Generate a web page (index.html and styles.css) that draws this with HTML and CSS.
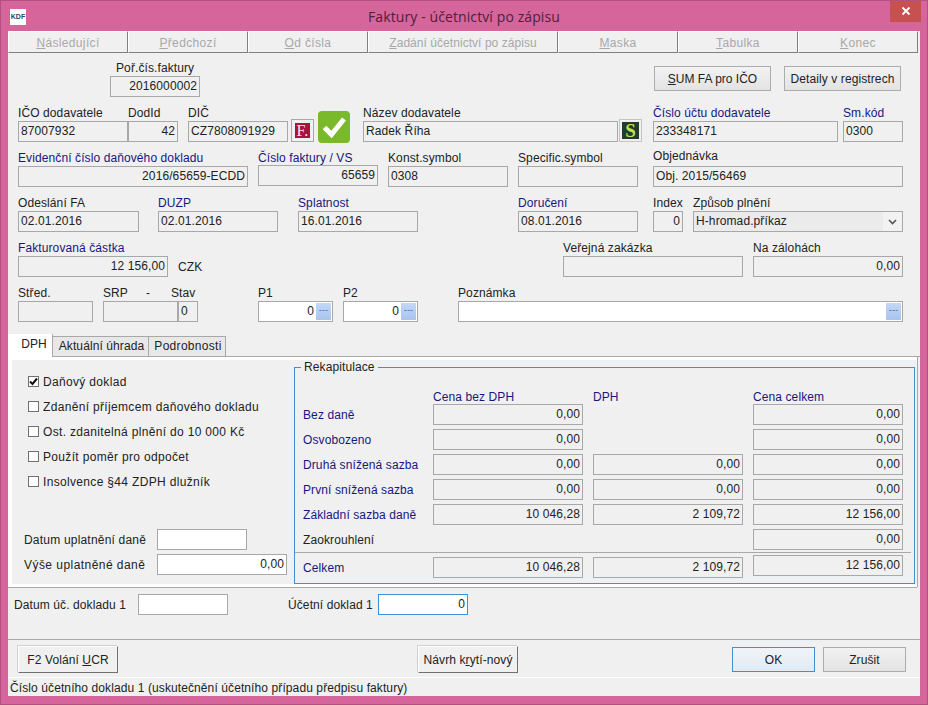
FILE: index.html
```html
<!DOCTYPE html>
<html lang="cs">
<head>
    <meta charset="UTF-8">
    <title>Faktury - účetnictví po zápisu</title>
    <link rel="stylesheet" href="styles.css">
</head>
<body>
<div class="window">
    <div class="titlebar">
        <div class="app-icon">KDF</div>
        <div class="title">Faktury - účetnictví po zápisu</div>
        <div class="close">
            <svg width="10" height="10" viewBox="0 0 10 10"><path d="M1.5 1.5l7 7M8.5 1.5l-7 7" stroke="#fff" stroke-width="1.8"/></svg>
        </div>
    </div>

    <div class="content">
        <div class="toolbar">
            <div class="tool t1"><u>N</u>ásledující</div>
            <div class="tool t1"><u>P</u>ředchozí</div>
            <div class="tool t1"><u>O</u>d čísla</div>
            <div class="tool t2"><u>Z</u>adání účetnictví po zápisu</div>
            <div class="tool t1"><u>M</u>aska</div>
            <div class="tool t1"><u>T</u>abulka</div>
            <div class="tool t3"><u>K</u>onec</div>
        </div>

        <div class="row first-row">
            <div class="group g-por">
                <label class="indent">Poř.čís.faktury</label>
                <div class="field right">2016000002</div>
            </div>
            <button class="btn btn-sum"><u>S</u>UM FA pro IČO</button>
            <button class="btn btn-detail">Detaily v registrech</button>
        </div>

        <div class="row">
            <div class="group g-ico"><label>IČO dodavatele</label><div class="field">87007932</div></div>
            <div class="group g-dod"><label>DodId</label><div class="field right">42</div></div>
            <div class="group g-dic"><label>DIČ</label><div class="field">CZ7808091929</div></div>
            <div class="logo-f"><span>F.</span></div>
            <div class="logo-ok">
                <svg width="32" height="32" viewBox="0 0 32 32"><path d="M6.5 16.5l7 7L26 8" fill="none" stroke="#fff" stroke-width="5"/></svg>
            </div>
            <div class="group g-nazev"><label>Název dodavatele</label><div class="field">Radek Říha</div></div>
            <div class="logo-s"><span>S</span></div>
            <div class="group g-ucet"><label class="blue">Číslo účtu dodavatele</label><div class="field">233348171</div></div>
            <div class="group g-smkod"><label class="blue">Sm.kód</label><div class="field">0300</div></div>
        </div>

        <div class="row">
            <div class="group g-evid"><label class="blue">Evidenční číslo daňového dokladu</label><div class="field right">2016/65659-ECDD</div></div>
            <div class="group g-fakt"><label class="blue short">Číslo faktury / VS</label><div class="field right">65659</div></div>
            <div class="group g-konst"><label>Konst.symbol</label><div class="field">0308</div></div>
            <div class="group g-spec"><label>Specific.symbol</label><div class="field"></div></div>
            <div class="group g-obj"><label>Objednávka</label><div class="field">Obj. 2015/56469</div></div>
        </div>

        <div class="row">
            <div class="group g-odes"><label>Odeslání FA</label><div class="field">02.01.2016</div></div>
            <div class="group g-duzp"><label class="blue">DUZP</label><div class="field">02.01.2016</div></div>
            <div class="group g-splat"><label class="blue">Splatnost</label><div class="field">16.01.2016</div></div>
            <div class="group g-doruc"><label class="blue">Doručení</label><div class="field">08.01.2016</div></div>
            <div class="group g-index"><label>Index</label><div class="field right">0</div></div>
            <div class="group g-zpusob">
                <label>Způsob plnění</label>
                <div class="field select">H-hromad.příkaz
                    <span class="arrow"><svg width="9" height="6" viewBox="0 0 9 6"><path d="M1 1l3.5 3.5L8 1" fill="none" stroke="#555" stroke-width="1.6"/></svg></span>
                </div>
            </div>
        </div>

        <div class="row">
            <div class="group g-castka"><label class="blue">Fakturovaná částka</label><div class="field right">12 156,00</div></div>
            <div class="czk">CZK</div>
            <div class="group g-verej"><label>Veřejná zakázka</label><div class="field"></div></div>
            <div class="group g-zal"><label>Na zálohách</label><div class="field right">0,00</div></div>
        </div>

        <div class="row">
            <div class="group g-stred"><label>Střed.</label><div class="field"></div></div>
            <div class="group g-srp"><label>SRP<span class="dash">-</span></label><div class="field"></div></div>
            <div class="group g-stav"><label class="stav-label">Stav</label><div class="field">0</div></div>
            <div class="group g-p1"><label>P1</label><div class="field white right spin-field">0<span class="spin">---</span></div></div>
            <div class="group g-p2"><label>P2</label><div class="field white right spin-field">0<span class="spin">---</span></div></div>
            <div class="group g-pozn"><label>Poznámka</label><div class="field white right spin-field"><span class="spin">---</span></div></div>
        </div>

        <div class="tabs">
            <div class="tab active">DPH</div>
            <div class="tab tab-uhrada">Aktuální úhrada</div>
            <div class="tab tab-podr">Podrobnosti</div>
        </div>

        <div class="panel">
            <div class="left-col">
                <div class="check"><span class="box">
                    <svg width="9" height="9" viewBox="0 0 9 9"><path d="M1 4.5l2.5 2.5L8 1.5" fill="none" stroke="#111" stroke-width="2"/></svg>
                </span>Daňový doklad</div>
                <div class="check"><span class="box"></span>Zdanění příjemcem daňového dokladu</div>
                <div class="check"><span class="box"></span>Ost. zdanitelná plnění do 10 000 Kč</div>
                <div class="check"><span class="box"></span>Použít poměr pro odpočet</div>
                <div class="check"><span class="box"></span>Insolvence §44 ZDPH dlužník</div>

                <div class="tax-row tax-first"><span class="tax-label">Datum uplatnění daně</span><div class="field white w-date"></div></div>
                <div class="tax-row"><span class="tax-label">Výše uplatněné daně</span><div class="field white right w-tax">0,00</div></div>
            </div>

            <div class="rekap">
                <span class="legend">Rekapitulace</span>
                <div class="rekap-grid">
                    <span></span><span class="blue head">Cena bez DPH</span><span class="blue head">DPH</span><span class="blue head">Cena celkem</span>

                    <span class="blue">Bez daně</span><div class="field right">0,00</div><span></span><div class="field right">0,00</div>
                    <span class="blue">Osvobozeno</span><div class="field right">0,00</div><span></span><div class="field right">0,00</div>
                    <span class="blue">Druhá snížená sazba</span><div class="field right">0,00</div><div class="field right">0,00</div><div class="field right">0,00</div>
                    <span class="blue">První snížená sazba</span><div class="field right">0,00</div><div class="field right">0,00</div><div class="field right">0,00</div>
                    <span class="blue">Základní sazba daně</span><div class="field right">10 046,28</div><div class="field right">2 109,72</div><div class="field right">12 156,00</div>
                    <span>Zaokrouhlení</span><span></span><span></span><div class="field right">0,00</div>
                </div>
                <div class="total-row">
                    <span class="blue">Celkem</span><div class="field right">10 046,28</div><div class="field right">2 109,72</div><div class="field right raised">12 156,00</div>
                </div>
            </div>
        </div>

        <div class="doc-row">
            <span class="doc-date-label">Datum úč. dokladu 1</span>
            <div class="field white w-date"></div>
            <span class="doc-num-label">Účetní doklad 1</span>
            <div class="field white right w-date focused">0</div>
        </div>

        <div class="footer">
            <button class="btn raised-btn btn-f2">F2 Volání <u>U</u>CR</button>
            <button class="btn raised-btn btn-navrh">Návrh k<u>r</u>ytí-nový</button>
            <button class="btn btn-ok">OK</button>
            <button class="btn btn-zrusit">Zrušit</button>
        </div>

        <div class="status">Číslo účetního dokladu 1 (uskutečnění účetního případu předpisu faktury)</div>
    </div>
</div>
</body>
</html>
```

FILE: styles.css
```css
* {
    box-sizing: border-box;
}

body {
    margin: 0;
    background-color: #d6659c;
    font-family: "Liberation Sans", Arial, sans-serif;
    font-size: 12px;
    letter-spacing: 0.1px;
    color: #222;
}

.window {
    width: 928px;
    height: 705px;
    padding: 0 7px 9px 7px;
    background-color: #d6659c;
    border: 1px solid #b2517f;
    display: flex;
    flex-direction: column;
    overflow: hidden;
}

/* title bar */
.titlebar {
    height: 30px;
    flex-shrink: 0;
    margin: 0 -7px;
    padding: 0 0 0 9px;
    display: flex;
    align-items: center;
    position: relative;
}

.app-icon {
    width: 16px;
    height: 16px;
    margin-top: 1px;
    background-color: white;
    color: #1c3f7c;
    font-size: 7px;
    font-weight: bold;
    letter-spacing: 0;
    line-height: 16px;
    text-align: center;
}

.title {
    flex: 1;
    text-align: center;
    font-family: "Open Sans", sans-serif;
    font-size: 14px;
    color: #4d2239;
    margin-right: 25px;
}

.close {
    position: absolute;
    top: -1px;
    right: 6px;
    width: 31px;
    height: 22px;
    background-color: #c75050;
    display: flex;
    justify-content: center;
    align-items: center;
}

.content {
    height: 665px;
    width: 912px;
    flex-shrink: 0;
    background-color: #f0f0f0;
    display: flex;
    flex-direction: column;
}

/* disabled toolbar */
.toolbar {
    display: flex;
    height: 22px;
    width: 910px;
    flex-shrink: 0;
}

.tool {
    height: 22px;
    line-height: 22px;
    text-align: center;
    color: #a8a8a8;
    letter-spacing: 0.35px;
    background-color: #f0f0f0;
    border: 1px solid;
    border-color: #fff #808080 #808080 #fff;
}

.t1 { width: 120px; }
.t2 { width: 190px; letter-spacing: 0.05px; }
.t3 { width: 120px; }

/* form rows */
.row {
    display: flex;
    height: 37px;
    flex-shrink: 0;
    margin-top: 8px;
    padding-left: 10px;
}

.first-row {
    margin-top: 7px;
}

.group {
    display: flex;
    flex-direction: column;
    flex-shrink: 0;
}

label {
    display: block;
    height: 16px;
    line-height: 16px;
    white-space: nowrap;
}

label.indent {
    padding-left: 6px;
}

label.short {
    height: 15px;
}

.stav-label {
    margin-left: -7px;
}

.dash {
    margin-left: 18px;
}

.blue {
    color: #17177f;
}

.field {
    height: 21px;
    line-height: 19px;
    padding: 0 2px;
    background-color: #f0f0f0;
    border: 1px solid #a8a8a8;
    white-space: nowrap;
}

.right {
    text-align: right;
}

.white {
    background-color: white;
}

.g-por { width: 90px; margin-left: 92px; }

.g-ico { width: 110px; }
.g-dod { width: 50px; }
.g-dic { width: 100px; margin-left: 10px; }
.g-nazev { width: 255px; margin-left: 13px; }
.g-ucet { width: 185px; margin-left: 11px; }
.g-smkod { width: 60px; margin-left: 5px; }

.g-evid { width: 230px; }
.g-fakt { width: 120px; margin-left: 10px; }
.g-konst { width: 120px; margin-left: 10px; }
.g-spec { width: 120px; margin-left: 10px; }
.g-obj { width: 250px; margin-left: 15px; }
.g-obj label { margin-top: -2px; height: 18px; }

.g-odes { width: 121px; }
.g-duzp { width: 120px; margin-left: 19px; }
.g-splat { width: 120px; margin-left: 20px; }
.g-doruc { width: 120px; margin-left: 100px; }
.g-index { width: 30px; margin-left: 15px; }
.g-zpusob { width: 210px; margin-left: 10px; }

.g-castka { width: 150px; }
.g-verej { width: 180px; margin-left: 358px; }
.g-zal { width: 150px; margin-left: 10px; }

.g-stred { width: 75px; }
.g-srp { width: 75px; margin-left: 10px; }
.g-stav { width: 20px; }
.g-p1 { width: 75px; margin-left: 60px; }
.g-p2 { width: 75px; margin-left: 10px; }
.g-pozn { width: 445px; margin-left: 40px; }

.czk {
    margin: 20px 0 0 10px;
    width: 27px;
    line-height: 14px;
}

.select {
    display: flex;
    justify-content: space-between;
    padding-right: 0;
    background-color: #ebebeb;
}

.arrow {
    width: 19px;
    height: 19px;
    background-color: #f2f2f2;
    display: flex;
    justify-content: center;
    align-items: center;
}

.spin-field {
    display: flex;
    justify-content: flex-end;
    padding: 0 0 0 2px;
}

.spin {
    width: 15px;
    height: 17px;
    margin: 1px 1px 0 2px;
    background: linear-gradient(#c4d7f5, #a9c4ee);
    color: #3a6ac0;
    text-align: center;
    line-height: 15px;
    font-size: 9px;
}

/* small logos next to the fields */
.logo-f {
    width: 23px;
    height: 23px;
    margin: 14px 0 0 3px;
    padding: 3px;
    border: 1px solid #a8a8a8;
    flex-shrink: 0;
}

.logo-f span {
    display: block;
    height: 15px;
    background-color: #a8123f;
    color: #f6e7ea;
    font-family: "Liberation Serif", serif;
    font-size: 16px;
    line-height: 15px;
    text-align: center;
}

.logo-ok {
    width: 32px;
    height: 32px;
    margin: 6px 0 0 4px;
    background-color: #7ab929;
    border-radius: 4px;
    flex-shrink: 0;
}

.logo-s {
    width: 23px;
    height: 23px;
    margin: 14px 0 0 1px;
    padding: 2px 2px;
    border: 1px solid #c4c4c4;
    flex-shrink: 0;
}

.logo-s span {
    display: block;
    height: 17px;
    background-color: #1f3d2a;
    color: #c8de55;
    font-family: "Liberation Serif", serif;
    font-size: 19px;
    font-weight: bold;
    line-height: 17px;
    text-align: center;
}

/* buttons */
.btn {
    height: 25px;
    padding: 0;
    font-family: inherit;
    font-size: 12px;
    letter-spacing: inherit;
    color: #222;
    background: linear-gradient(#f2f2f2, #e3e3e3);
    border: 1px solid #acacac;
    flex-shrink: 0;
}

.btn-sum {
    width: 117px;
    margin: 6px 0 0 454px;
    letter-spacing: 0;
}

.btn-detail {
    width: 117px;
    margin: 6px 0 0 13px;
}

/* tabs */
.tabs {
    display: flex;
    height: 35px;
    flex-shrink: 0;
    padding-top: 12px;
    align-items: flex-end;
    border-bottom: 1px solid #a8a8a8;
}

.tab {
    height: 20px;
    line-height: 19px;
    text-align: center;
    background-color: #e8e8e8;
    border: 1px solid #a8a8a8;
    border-left: 0;
    border-bottom: 0;
}

.tab.active {
    width: 45px;
    height: 23px;
    margin-bottom: -1px;
    padding-left: 8px;
    line-height: 21px;
    background-color: white;
    border: 0;
    border-right: 1px solid #a8a8a8;
    position: relative;
}

.tab-uhrada { width: 96px; padding-left: 2px; }
.tab-podr { width: 77px; letter-spacing: 0.3px; padding-left: 2px; }

.panel {
    display: flex;
    height: 230px;
    width: 909px;
    flex-shrink: 0;
    background-color: #f0f0f0;
    border-left: 4px solid white;
    border-top: 3px solid white;
    border-bottom: 3px solid white;
    box-shadow: 0 1px 0 #a8a8a8, 1px 0 0 #a8a8a8;
}

.left-col {
    width: 282px;
    padding: 9px 0 0 16px;
    flex-shrink: 0;
}

.check {
    height: 25px;
    display: flex;
    align-items: center;
    letter-spacing: 0.33px;
}

.box {
    width: 11px;
    height: 11px;
    margin-right: 4px;
    background-color: white;
    border: 1px solid #707070;
    display: flex;
    justify-content: center;
    align-items: center;
}

.tax-row {
    display: flex;
    align-items: center;
    height: 21px;
    margin-top: 4px;
    margin-left: -4px;
    letter-spacing: 0.2px;
}

.tax-row + .tax-row {
    letter-spacing: 0.45px;
}

.tax-first {
    margin-top: 35px;
}

.tax-label {
    width: 133px;
    flex-shrink: 0;
}

.w-date { width: 90px; flex-shrink: 0; }
.w-tax { width: 130px; letter-spacing: 0.1px; }

/* recapitulation box */
.rekap {
    width: 621px;
    height: 217px;
    margin-top: 7px;
    border: 1px solid #3d8fd6;
    position: relative;
}

.legend {
    position: absolute;
    top: -8px;
    left: 6px;
    padding: 0 3px;
    line-height: 14px;
    background-color: #f0f0f0;
}

.rekap-grid {
    display: grid;
    grid-template-columns: 120px 150px 150px 150px;
    grid-auto-rows: 21px;
    column-gap: 10px;
    row-gap: 4px;
    margin: 11px 0 0 8px;
    align-items: center;
}

.total-row {
    display: grid;
    grid-template-columns: 120px 150px 150px 150px;
    column-gap: 10px;
    align-items: center;
    height: 28px;
    margin: 2px 3px 0 0;
    padding: 2px 0 0 8px;
    border-top: 1px solid #a8a8a8;
}

.raised {
    align-self: start;
}

.head {
    align-self: end;
    margin-bottom: -4px;
}

/* row under the panel */
.doc-row {
    display: flex;
    align-items: center;
    height: 21px;
    flex-shrink: 0;
    margin-top: 7px;
}

.doc-date-label {
    width: 130px;
    padding-left: 6px;
}

.doc-num-label {
    width: 90px;
    margin-left: 60px;
}

.focused {
    border-color: #3d8fd6;
}

.footer {
    display: flex;
    align-items: flex-start;
    height: 38px;
    flex-shrink: 0;
    margin-top: 24px;
    padding: 6px 0 0 10px;
    border-top: 1px solid #a8a8a8;
}

.raised-btn {
    height: 27px;
    background: #f0f0f0;
    border-color: #fff #707070 #707070 #fff;
    box-shadow: -1px -1px 0 #d0d0d0;
}

.btn-f2 { width: 100px; }
.btn-navrh { width: 100px; margin-left: 300px; }

.btn-ok {
    width: 83px;
    margin: 1px 0 0 214px;
    border-color: #3d8fd6;
    background: linear-gradient(#f0f4f8, #e2eaf2);
}

.btn-zrusit {
    width: 83px;
    margin: 1px 0 0 8px;
}

.status {
    height: 18px;
    line-height: 21px;
    padding-left: 2px;
    background-color: #f0f0f0;
    border-top: 1px solid #fff;
}
```
